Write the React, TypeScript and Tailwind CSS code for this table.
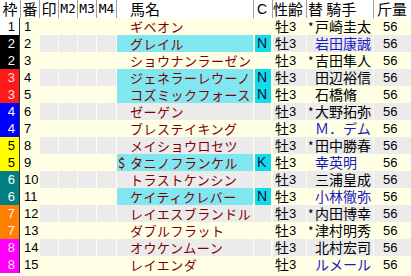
import React from "react";

type Row = {
  w: number;
  n: number;
  name: string;
  mark?: string;
  c?: string;
  jm?: string;
  j: string;
  blue?: boolean;
};

const rows: Row[] = [
  { w: 1, n: 1, name: "ギベオン", jm: "*", j: "戸崎圭太" },
  { w: 2, n: 2, name: "グレイル", c: "N", j: "岩田康誠", blue: true },
  { w: 2, n: 3, name: "ショウナンラーゼン", jm: "*", j: "吉田隼人" },
  { w: 3, n: 4, name: "ジェネラーレウーノ", c: "N", j: "田辺裕信" },
  { w: 3, n: 5, name: "コズミックフォース", c: "N", j: "石橋脩" },
  { w: 4, n: 6, name: "ゼーゲン", jm: "*", j: "大野拓弥" },
  { w: 4, n: 7, name: "ブレステイキング", j: "Ｍ．デム", blue: true },
  { w: 5, n: 8, name: "メイショウロセツ", jm: "*", j: "田中勝春" },
  { w: 5, n: 9, name: "タニノフランケル", mark: "$", c: "K", j: "幸英明", blue: true },
  { w: 6, n: 10, name: "トラストケンシン", j: "三浦皇成" },
  { w: 6, n: 11, name: "ケイティクレバー", c: "N", j: "小林徹弥", blue: true },
  { w: 7, n: 12, name: "レイエスブランドル", jm: "*", j: "内田博幸" },
  { w: 7, n: 13, name: "ダブルフラット", jm: "*", j: "津村明秀" },
  { w: 8, n: 14, name: "オウケンムーン", j: "北村宏司" },
  { w: 8, n: 15, name: "レイエンダ", j: "ルメール", blue: true },
];

const wakuCls: Record<number, string> = {
  1: "bg-white text-black",
  2: "bg-black text-white",
  3: "bg-[#ff1a1a] text-[#ffe0e0]",
  4: "bg-[#0000ff] text-white",
  5: "bg-[#ffff00] text-black",
  6: "bg-[#008080] text-white",
  7: "bg-[#ff8000] text-[#fff0e0]",
  8: "bg-[#ff00ff] text-[#ffe0ff]",
};

const num = "font-['Liberation_Sans',sans-serif] text-[13px]";

export default function App() {
  return (
    <div className="w-[411px] h-[276px] overflow-hidden bg-[#ffffe6] font-['Noto_Sans_CJK_JP',sans-serif] text-black">
      {/* header */}
      <div className="flex h-[18px] bg-white text-[15px] leading-[18px]">
        <div className="w-[20px] text-center">枠</div>
        <div className="w-[19px] border-l border-[#a0a0a0] text-center">番</div>
        <div className="w-[19px] border-l border-[#a0a0a0] text-center">印</div>
        <div className="w-[19px] border-l border-[#a0a0a0] text-center font-['DejaVu_Sans_Mono',monospace] text-[13px]">M2</div>
        <div className="w-[19px] border-l border-[#a0a0a0] text-center font-['DejaVu_Sans_Mono',monospace] text-[13px]">M3</div>
        <div className="w-[20px] border-l border-[#a0a0a0] text-center font-['DejaVu_Sans_Mono',monospace] text-[13px]">M4</div>
        <div className="w-[137px] border-l border-[#a0a0a0] pl-[13px]">馬名</div>
        <div className="w-[19px] border-l border-[#a0a0a0] pl-[3px] font-['Liberation_Sans',sans-serif] text-[14px]">C</div>
        <div className="w-[34px] border-l border-[#a0a0a0]">性齢</div>
        <div className="w-[67px] border-l border-[#a0a0a0] pl-[1px] whitespace-pre">替 騎手</div>
        <div className="w-[38px] border-l border-[#a0a0a0] pl-[3px]">斤量</div>
      </div>
      {rows.map((r) => {
        const gray = r.n % 2 === 0;
        const bg = gray ? "bg-[#ebebeb]" : "bg-[#ffffe6]";
        const nameBg = r.c ? "bg-[#80e6f0]" : bg;
        return (
          <div key={r.n} className="flex h-[17px] leading-[17px]">
            <div
              className={`w-[20px] h-full border-r border-[#303030] text-right pr-[4px] ${num} ${wakuCls[r.w]}`}
            >
              {r.w}
            </div>
            <div className={`w-[19px] h-full pl-[4px] ${num}`}>{r.n}</div>
            {[19, 19, 19, 20].map((w, i) => (
              <div key={i} className="h-full pl-px" style={{ width: w }}>
                <div className={`h-full ${bg}`} />
              </div>
            ))}
            <div className="w-[137px] h-full pl-px">
              <div className={`h-full flex ${nameBg} text-[#800000]`}>
                <span className="w-[13px] text-[13px] pl-px">{r.mark ?? ""}</span>
                <span className="text-[13px] tracking-[0.5px] whitespace-nowrap">{r.name}</span>
              </div>
            </div>
            <div className="w-[19px] h-full pl-[2px] pr-px">
              {r.c ? (
                <div className="h-full bg-[#10dceb] pl-[2px] font-['Liberation_Sans',sans-serif] text-[14px] text-[#101030]">
                  {r.c}
                </div>
              ) : (
                <div className={`h-full -ml-px ${bg}`} />
              )}
            </div>
            <div className="w-[34px] h-full pl-px">
              <div className={`h-full ${bg} pl-[2px] flex items-center`}>
                <span className="text-[14px]">牡</span>
                <span className={num}>3</span>
              </div>
            </div>
            <div className="w-[67px] h-full pl-px">
              <div className={`h-full ${bg} flex`}>
                <span className="w-[8px] pl-px text-[12px]">{r.jm ?? ""}</span>
                <span className={`text-[14px] whitespace-nowrap ${r.blue ? "text-[#1a1ac4]" : "text-black"}`}>
                  {r.j}
                </span>
              </div>
            </div>
            <div className="w-[38px] h-full pl-px">
              <div className={`h-full ${bg} pl-[9px] ${num}`}>56</div>
            </div>
          </div>
        );
      })}
    </div>
  );
}
